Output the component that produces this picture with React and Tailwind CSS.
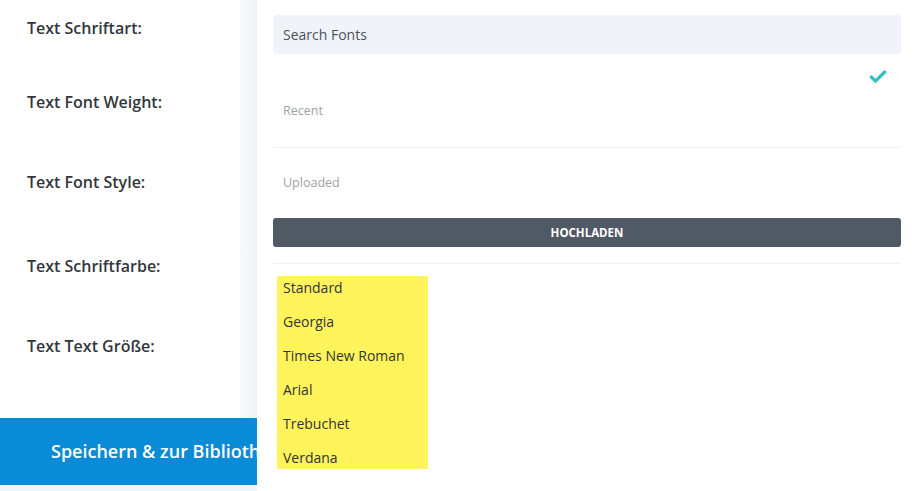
import { Check } from "lucide-react";

const labels = [
  { text: "Text Schriftart:", mt: "mt-[17px]" },
  { text: "Text Font Weight:", mt: "mt-[52px]" },
  { text: "Text Font Style:", mt: "mt-[58px]" },
  { text: "Text Schriftfarbe:", mt: "mt-[62px]" },
  { text: "Text Text Größe:", mt: "mt-[58px]" },
];

const fonts = ["Standard", "Georgia", "Times New Roman", "Arial", "Trebuchet", "Verdana"];

export default function App() {
  return (
    <div
      className="flex h-[491px] w-[917px] overflow-hidden bg-white text-[#333]"
      style={{ fontFamily: '"Open Sans", "Noto Sans", sans-serif' }}
    >
      {/* Settings column (behind the dropdown) */}
      <div className="flex w-[257px] shrink-0 flex-col overflow-hidden">
        <div className="flex flex-1">
          <div className="w-[240px] pl-[27px]">
            {labels.map((l) => (
              <p key={l.text} className={`${l.mt} text-[16px] font-semibold leading-[22px] text-[#32373c]`}>
                {l.text}
              </p>
            ))}
          </div>
          <div className="flex-1 bg-gradient-to-r from-[#f7f9fc] to-[#eef3f8]" />
        </div>
        <div className="h-[67px] overflow-hidden bg-[#0a8bd7]">
          <p className="w-[320px] whitespace-nowrap pl-[51px] text-[18px] font-semibold leading-[67px] text-white">
            Speichern &amp; zur Bibliothek
          </p>
        </div>
        <div className="h-[6px] bg-[#eef5fb]" />
      </div>

      {/* Font dropdown */}
      <div className="flex-1 bg-white px-4 pt-[15px]">
        <div className="flex h-[39px] w-[628px] items-center rounded-[3px] bg-[#f0f4fa] pl-[10px] text-[14px] text-[#4d5257]">
          Search Fonts
        </div>
        <div className="flex h-[94px] w-[628px] flex-col border-b border-[#eef0f3]">
          <div className="flex justify-end pr-[13px] pt-[13px]">
            <Check className="h-[20px] w-[20px] text-[#36bfc7]" strokeWidth={4} />
          </div>
          <p className="mt-[15px] pl-[10px] text-[12.5px] text-[#9ea2a6]">Recent</p>
        </div>
        <div className="flex h-[70px] w-[628px] items-center pl-[10px] text-[12.5px] text-[#9ea2a6]">
          Uploaded
        </div>
        <div className="flex h-[29px] w-[628px] items-center justify-center rounded-[3px] bg-[#4f5a65] text-[11.5px] font-bold text-white">
          HOCHLADEN
        </div>
        <div className="mt-[16px] h-px w-[628px] bg-[#eef0f3]" />
        <ul className="ml-[4px] mt-[12px] flex w-[151px] flex-col gap-[12px] bg-[#fff45c] pb-[1px]">
          {fonts.map((f) => (
            <li key={f} className="flex h-[22px] items-center pl-[6px] text-[14px] text-[#333]">
              {f}
            </li>
          ))}
        </ul>
      </div>
    </div>
  );
}
